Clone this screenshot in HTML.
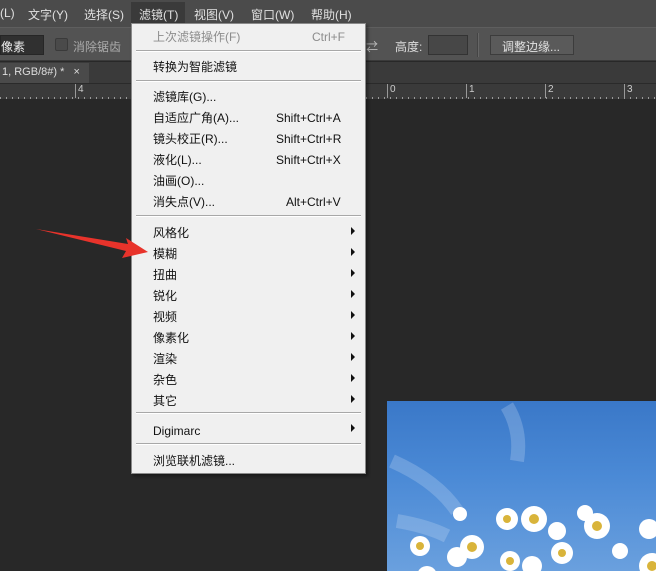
<!DOCTYPE html>
<html><head><meta charset="utf-8"><style>
*{margin:0;padding:0;box-sizing:border-box}
body{width:656px;height:571px;overflow:hidden;background:#282828;font-family:"Liberation Sans","Noto Sans CJK SC",sans-serif;font-size:12px;position:relative}
.a{position:absolute;white-space:nowrap}
.mb{color:#e0e0e0;top:6px}
.mi{position:absolute;left:21px;color:#111;font-size:12px;line-height:14px}
.sc{position:absolute;left:144px;color:#111;font-size:12px;line-height:14px}
.sep{position:absolute;left:4px;right:4px;height:2px;border-top:1px solid #a8a8a8;border-bottom:1px solid #fff}
.ar{position:absolute;left:219px;width:0;height:0;border-left:4px solid #111;border-top:4px solid transparent;border-bottom:4px solid transparent}
</style></head><body>
<div class="a" style="left:0;top:0;width:656px;height:27px;background:#4b4b4b"></div>
<div class="a mb" style="left:0">(L)</div>
<div class="a mb" style="left:28px">文字(Y)</div>
<div class="a mb" style="left:84px">选择(S)</div>
<div class="a" style="left:131px;top:2px;width:54px;height:22px;background:#3a3a3a"></div>
<div class="a mb" style="left:139px">滤镜(T)</div>
<div class="a mb" style="left:194px">视图(V)</div>
<div class="a mb" style="left:251px">窗口(W)</div>
<div class="a mb" style="left:311px">帮助(H)</div>

<div class="a" style="left:0;top:27px;width:656px;height:34px;background:#535353;border-top:1px solid #5e5e5e;border-bottom:1px solid #3a3a3a"></div>
<div class="a" style="left:0;top:35px;width:44px;height:20px;background:#303030;border:1px solid #262626;color:#eee;padding:2px 0 0 0">像素</div>
<div class="a" style="left:55px;top:38px;width:13px;height:13px;background:#4a4a4a;border:1px solid #3a3a3a;border-radius:2px"></div>
<div class="a" style="left:73px;top:38px;color:#aaa">消除锯齿</div>
<div class="a" style="left:366px;top:38px;color:#bbb">⇄</div>
<div class="a" style="left:395px;top:38px;color:#ddd">高度:</div>
<div class="a" style="left:428px;top:35px;width:40px;height:20px;background:#474747;border:1px solid #333"></div>
<div class="a" style="left:477px;top:33px;width:2px;height:24px;border-left:1px solid #444;border-right:1px solid #666"></div>
<div class="a" style="left:490px;top:35px;width:84px;height:20px;background:#5a5a5a;border:1px solid #3c3c3c;color:#e0e0e0;padding:2px 0 0 11px">调整边缘...</div>

<div class="a" style="left:0;top:62px;width:656px;height:21px;background:#3a3a3a"></div>
<div class="a" style="left:0;top:63px;width:89px;height:20px;background:#4a4a4a;color:#ddd;padding:3px 0 0 2px;font-size:11px">1, RGB/8#) * &nbsp;&nbsp;×</div>
<div class="a" style="left:0;top:83px;width:656px;height:16px;background:#3a3a3a;border-top:1px solid #2a2a2a;background-image:repeating-linear-gradient(90deg,#999 0 1px,transparent 1px 6px);background-size:100% 3px;background-position:0 13px;background-repeat:no-repeat"></div>
<div class="a" style="left:75px;top:84px;color:#ccc;font-size:10px;border-left:1px solid #999;padding-left:2px;height:14px">4</div>
<div class="a" style="left:387px;top:84px;color:#ccc;font-size:10px;border-left:1px solid #999;padding-left:2px;height:14px">0</div>
<div class="a" style="left:466px;top:84px;color:#ccc;font-size:10px;border-left:1px solid #999;padding-left:2px;height:14px">1</div>
<div class="a" style="left:545px;top:84px;color:#ccc;font-size:10px;border-left:1px solid #999;padding-left:2px;height:14px">2</div>
<div class="a" style="left:624px;top:84px;color:#ccc;font-size:10px;border-left:1px solid #999;padding-left:2px;height:14px">3</div>

<div class="a" style="left:387px;top:401px;width:269px;height:170px;background:linear-gradient(180deg,#3a78c8 0%,#4b8ad6 45%,#6aa0de 100%);overflow:hidden">
<svg width="269" height="170">
<g fill="none" stroke="#d5e4f6" stroke-opacity=".25" stroke-width="14"><path d="M5 60 Q50 80 70 110"/><path d="M120 5 Q135 30 130 60"/><path d="M10 120 Q40 125 60 135"/></g>
<g fill="#fff">
<circle cx="33" cy="145" r="10"/><circle cx="85" cy="146" r="12"/><circle cx="70" cy="156" r="10"/><circle cx="120" cy="118" r="11"/><circle cx="147" cy="118" r="13"/><circle cx="210" cy="125" r="13"/><circle cx="198" cy="112" r="8"/><circle cx="170" cy="130" r="9"/><circle cx="175" cy="152" r="11"/><circle cx="123" cy="160" r="10"/><circle cx="145" cy="165" r="10"/><circle cx="233" cy="150" r="8"/><circle cx="265" cy="165" r="13"/><circle cx="262" cy="128" r="10"/><circle cx="40" cy="175" r="10"/><circle cx="73" cy="113" r="7"/>
</g>
<g fill="#d9b43a"><circle cx="33" cy="145" r="4"/><circle cx="85" cy="146" r="5"/><circle cx="147" cy="118" r="5"/><circle cx="210" cy="125" r="5"/><circle cx="120" cy="118" r="4"/><circle cx="175" cy="152" r="4"/><circle cx="265" cy="165" r="5"/><circle cx="123" cy="160" r="4"/></g>
</svg></div>

<div class="a" style="left:131px;top:23px;width:235px;height:451px;background:#f0f0f0;border:1px solid #8a8a8a;box-shadow:2px 2px 3px rgba(0,0,0,.4)">
<div class="mi" style="top:6px;color:#8c8c8c">上次滤镜操作(F)</div><div class="sc" style="top:6px;left:180px;color:#8c8c8c">Ctrl+F</div>
<div class="sep" style="top:26px"></div>
<div class="mi" style="top:36px">转换为智能滤镜</div>
<div class="sep" style="top:56px"></div>
<div class="mi" style="top:66px">滤镜库(G)...</div>
<div class="mi" style="top:87px">自适应广角(A)...</div><div class="sc" style="top:87px">Shift+Ctrl+A</div>
<div class="mi" style="top:108px">镜头校正(R)...</div><div class="sc" style="top:108px">Shift+Ctrl+R</div>
<div class="mi" style="top:129px">液化(L)...</div><div class="sc" style="top:129px">Shift+Ctrl+X</div>
<div class="mi" style="top:150px">油画(O)...</div>
<div class="mi" style="top:171px">消失点(V)...</div><div class="sc" style="top:171px;left:154px">Alt+Ctrl+V</div>
<div class="sep" style="top:191px"></div>
<div class="mi" style="top:202px">风格化</div><div class="ar" style="top:203px"></div>
<div class="mi" style="top:223px">模糊</div><div class="ar" style="top:224px"></div>
<div class="mi" style="top:244px">扭曲</div><div class="ar" style="top:245px"></div>
<div class="mi" style="top:265px">锐化</div><div class="ar" style="top:266px"></div>
<div class="mi" style="top:286px">视频</div><div class="ar" style="top:287px"></div>
<div class="mi" style="top:307px">像素化</div><div class="ar" style="top:308px"></div>
<div class="mi" style="top:328px">渲染</div><div class="ar" style="top:329px"></div>
<div class="mi" style="top:349px">杂色</div><div class="ar" style="top:350px"></div>
<div class="mi" style="top:370px">其它</div><div class="ar" style="top:371px"></div>
<div class="sep" style="top:388px"></div>
<div class="mi" style="top:400px">Digimarc</div><div class="ar" style="top:400px"></div>
<div class="sep" style="top:419px"></div>
<div class="mi" style="top:430px">浏览联机滤镜...</div>
</div>
<svg class="a" style="left:0;top:0" width="160" height="271"><polygon points="36,229 128,244 126,238 148,252 122,258 126,251" fill="#e8332b"/></svg>
</body></html>
